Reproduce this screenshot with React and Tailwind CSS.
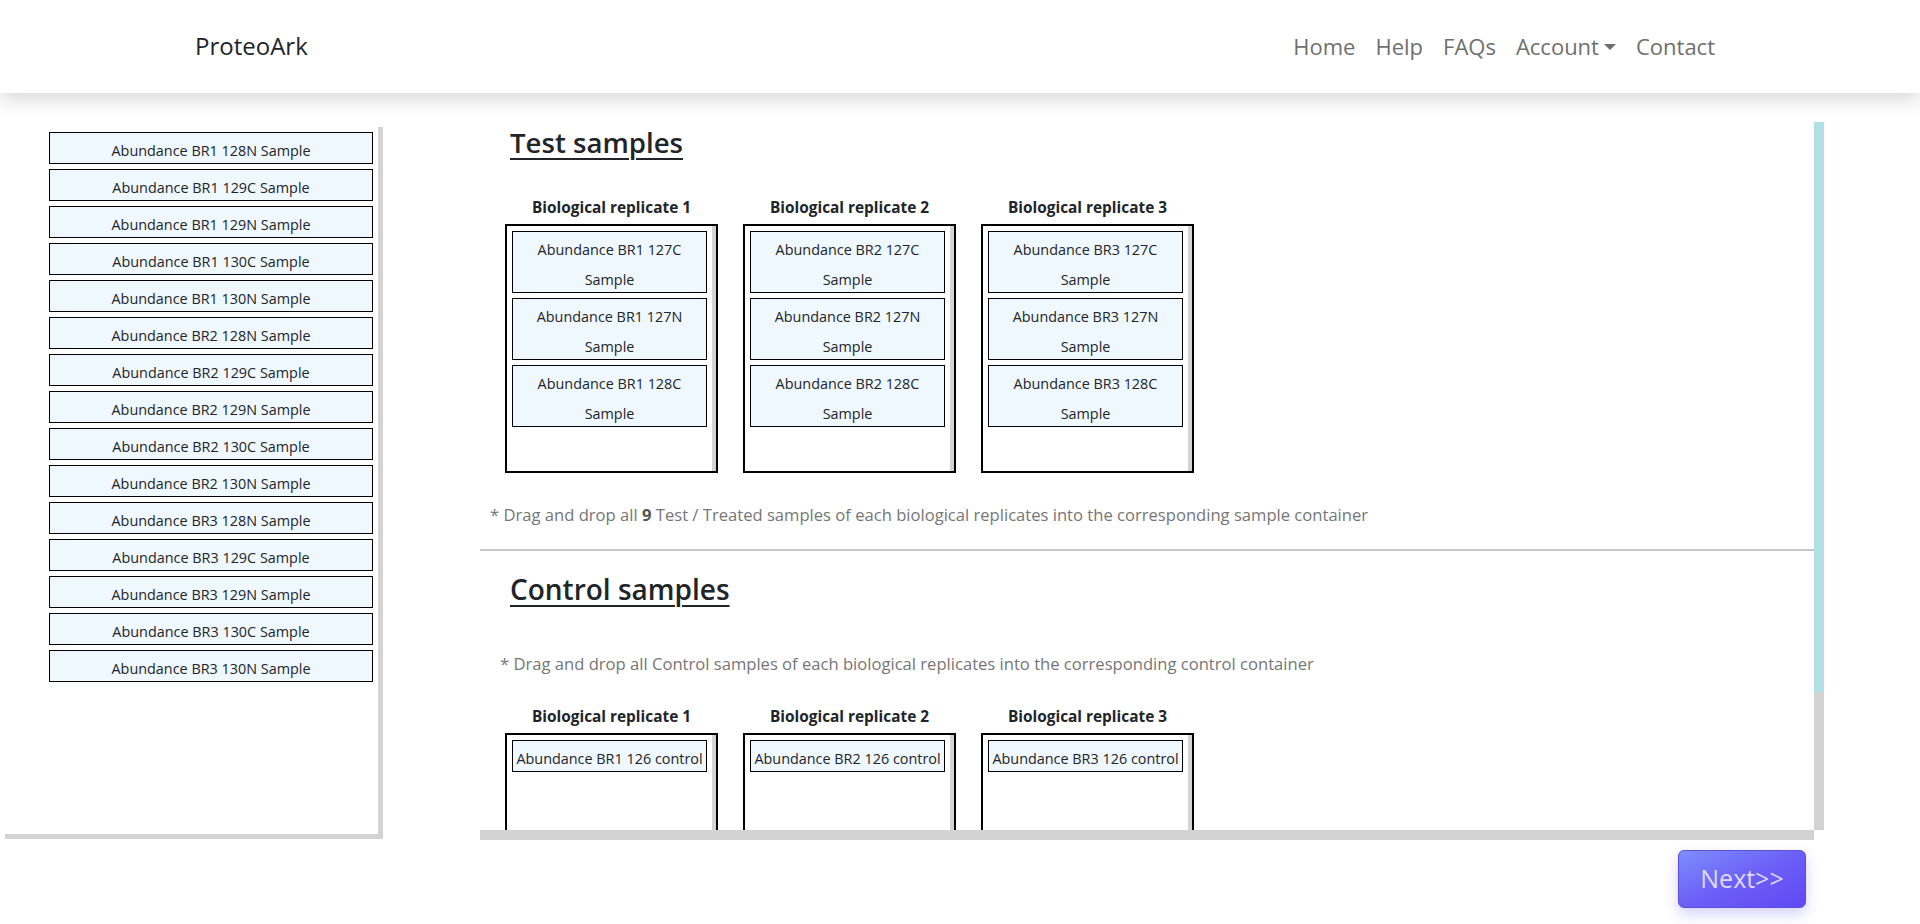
import React from "react";

const NAV_LINKS = ["Home", "Help", "FAQs", "Account", "Contact"];

const POOL = [
  "Abundance BR1 128N Sample",
  "Abundance BR1 129C Sample",
  "Abundance BR1 129N Sample",
  "Abundance BR1 130C Sample",
  "Abundance BR1 130N Sample",
  "Abundance BR2 128N Sample",
  "Abundance BR2 129C Sample",
  "Abundance BR2 129N Sample",
  "Abundance BR2 130C Sample",
  "Abundance BR2 130N Sample",
  "Abundance BR3 128N Sample",
  "Abundance BR3 129C Sample",
  "Abundance BR3 129N Sample",
  "Abundance BR3 130C Sample",
  "Abundance BR3 130N Sample",
];

const TEST_GROUPS = [1, 2, 3].map((br) => ({
  title: `Biological replicate ${br}`,
  items: ["127C", "127N", "128C"].map((ch) => `Abundance BR${br} ${ch} Sample`),
}));

const CONTROL_GROUPS = [1, 2, 3].map((br) => ({
  title: `Biological replicate ${br}`,
  items: [`Abundance BR${br} 126 control`],
}));

// text in the reference sits a few px low in its box, hence pt + fixed height
function SampleItem({ label, tall }) {
  return (
    <div
      className={
        (tall ? "h-[62px]" : "h-[32px]") +
        " overflow-hidden border border-black bg-[#f0f8ff] pt-[3px] text-center text-[14.4px] leading-[30px] text-[#212529]"
      }
    >
      {label}
    </div>
  );
}

function ReplicateRow({ groups, tall }) {
  return (
    <div className="flex gap-[25px] pl-[25px]">
      {groups.map((group) => (
        <div key={group.title} className="flex w-[213px] flex-col">
          <div className="text-center text-[15.4px] font-bold leading-[20px] text-[#212529]">
            {group.title}
          </div>
          <div className="mt-[6px] flex h-[249px] border-2 border-black bg-white">
            <div className="flex flex-1 flex-col gap-[5px] p-[5px]">
              {group.items.map((item) => (
                <SampleItem key={item} label={item} tall={tall} />
              ))}
            </div>
            <div className="w-[4px] bg-[#d3d3d3]" />
          </div>
        </div>
      ))}
    </div>
  );
}

export default function App() {
  return (
    <div className="min-h-screen bg-white font-['Open_Sans','Noto_Sans',sans-serif] text-[#212529]">
      <nav className="relative z-10 h-[93px] bg-white shadow-[0_8px_18px_rgba(0,0,0,0.14)]">
        <div className="mx-auto flex h-full w-[1530px] items-center justify-between pb-[2px]">
          <span className="text-[24px] leading-none text-[#212529]">ProteoArk</span>
          <ul className="flex items-center">
            {NAV_LINKS.map((link) => (
              <li key={link} className="px-[10px] text-[22px] leading-none text-[#6f6f6f]">
                {link}
                {link === "Account" && (
                  <span className="ml-[5px] inline-block border-x-[6px] border-t-[6px] border-x-transparent border-t-current align-[0.2em]" />
                )}
              </li>
            ))}
          </ul>
        </div>
      </nav>

      <div className="flex items-start pt-[29px]">
        {/* sample pool */}
        <div className="h-[712px] w-[378px] shrink-0 bg-white shadow-[5px_5px_0_#d3d3d3]">
          <div className="flex flex-col gap-[5px] pl-[49px] pr-[5px] pt-[10px]">
            {POOL.map((item) => (
              <SampleItem key={item} label={item} />
            ))}
          </div>
        </div>

        {/* drop area */}
        <div className="ml-[102px] w-[1344px] shrink-0">
          <div className="flex">
            <div className="flex w-[1334px] flex-col">
              <div className="h-[708px] overflow-hidden bg-white">
                <h3 className="pl-[30px] pt-[3px] text-[27.6px] font-semibold leading-[34px] underline decoration-[2px] underline-offset-[5px]">
                  Test samples
                </h3>
                <div className="mt-[39px]">
                  <ReplicateRow groups={TEST_GROUPS} tall />
                </div>
                <p className="mt-[29px] pl-[10px] text-[16.6px] leading-[25px] text-[#767676]">
                  * Drag and drop all <b className="text-[#555]">9</b> Test / Treated samples of each biological replicates into the corresponding sample container
                </p>
                <div className="mt-[22px] h-[2px] bg-[#c8c8c8]" />
                <h3 className="mt-[21px] pl-[30px] text-[28px] font-semibold leading-[34px] underline decoration-[2px] underline-offset-[5px]">
                  Control samples
                </h3>
                <p className="mt-[45px] pl-[20px] text-[16.6px] leading-[25px] text-[#767676]">
                  * Drag and drop all Control samples of each biological replicates into the corresponding control container
                </p>
                <div className="mt-[31px]">
                  <ReplicateRow groups={CONTROL_GROUPS} />
                </div>
              </div>
              <div className="h-[10px] bg-[#d3d3d3]" />
            </div>
            <div className="flex h-[708px] w-[10px] flex-col">
              <div className="h-[570px] bg-[#b0e0e6]" />
              <div className="flex-1 bg-[#d3d3d3]" />
            </div>
          </div>
          <div className="mt-[10px] flex justify-end pr-[18px]">
            <button className="h-[58px] w-[128px] rounded-[6px] border border-[#5b4fe0] bg-gradient-to-br from-[#7e8dfd] via-[#6c5ff7] to-[#6148f4] text-[25px] text-[#dcdaf8] shadow-[0_6px_14px_rgba(100,90,240,0.28)]">
              Next&gt;&gt;
            </button>
          </div>
        </div>
      </div>
    </div>
  );
}
